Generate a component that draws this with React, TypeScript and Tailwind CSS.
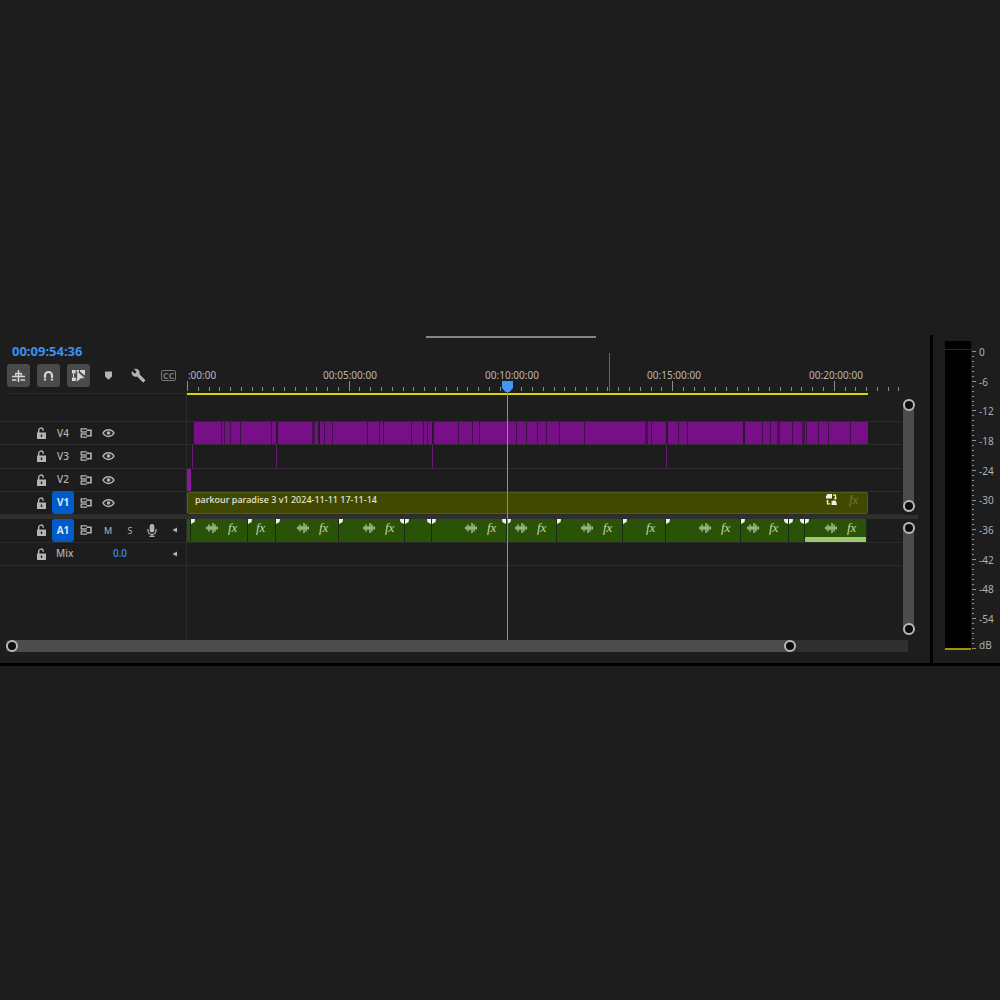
import type { ReactNode } from "react";
import clsx from "clsx";
import { MdBuild } from "react-icons/md";

type AudioClip = {
  width: number;
  wave?: boolean;
  fx?: boolean;
  fadeIn?: boolean;
  fadeOut?: boolean;
  peaks?: boolean;
};

const SEQUENCE_WIDTH = 681;
const PLAYHEAD = 320;

const timeLabels = [
  { text: ":00:00", at: 15 },
  { text: "00:05:00:00", at: 163 },
  { text: "00:10:00:00", at: 325 },
  { text: "00:15:00:00", at: 487 },
  { text: "00:20:00:00", at: 649 },
];

const thinCuts = [
  34, 37, 43, 53, 84, 137, 145, 180, 192, 196, 224, 236, 240, 271, 285, 292, 329, 339, 350, 359,
  372, 397, 464, 491, 500, 575, 583, 605, 619, 631, 641, 663,
];
const gaps = [89, 131, 245, 479, 556];
const denseCuts = [125, 458, 590, 615];

const v3Clips = [5, 89, 245, 479];

const audioClips: AudioClip[] = [
  { width: 4 },
  { width: 57, wave: true, fx: true, fadeIn: true },
  { width: 28, fx: true, fadeIn: true },
  { width: 63, wave: true, fx: true, fadeIn: true },
  { width: 66, wave: true, fx: true, fadeIn: true, fadeOut: true },
  { width: 27, fadeIn: true, fadeOut: true },
  { width: 75, wave: true, fx: true, fadeIn: true, fadeOut: true },
  { width: 50, wave: true, fx: true, fadeIn: true },
  { width: 66, wave: true, fx: true, fadeIn: true },
  { width: 43, fx: true, fadeIn: true },
  { width: 75, wave: true, fx: true, fadeIn: true },
  { width: 48, wave: true, fx: true, fadeIn: true, fadeOut: true },
  { width: 16, fadeIn: true, fadeOut: true },
  { width: 62, wave: true, fx: true, fadeIn: true, peaks: true },
];

const meterLabels = ["0", "-6", "-12", "-18", "-24", "-30", "-36", "-42", "-48", "-54"];

function NestIcon() {
  return (
    <svg width="15" height="14" viewBox="0 0 15 14" stroke="currentColor" fill="none">
      <path d="M7.500 1v12" strokeWidth="1.500" />
      <path d="M4 4.500h7" strokeWidth="1.400" />
      <path d="M1 7.500h13M1 11h4.500M9.500 11H14" strokeWidth="1.700" />
      <path d="M4.800 4v4M10.200 4v4" strokeWidth="1.200" />
    </svg>
  );
}

function MagnetIcon() {
  return (
    <svg width="11" height="11" viewBox="0 0 11 11" fill="none" stroke="currentColor">
      <path d="M2 10.500V5.500a3.500 3.500 0 0 1 7 0v5" strokeWidth="2.200" />
      <path d="M.5 8.300h3M7.500 8.300h3" stroke="#4a4a4a" strokeWidth=".8" />
    </svg>
  );
}

function LinkedSelectionIcon() {
  return (
    <svg width="15" height="15" viewBox="0 0 15 15" fill="currentColor">
      <path d="M1 2h3.500v3.500H1zM5.500 2h2.500v2.500H5.500zM9 2h5v5.500l-2-1.500L9 3.500zM1 9.500h3.500V13H1z" />
      <path d="M2.500 6v3M5 10v3" stroke="currentColor" />
      <path d="M6 3.200 14 9.900 9.800 10.400 6 14z" stroke="#4a4a4a" strokeWidth=".4" />
    </svg>
  );
}

function LockIcon() {
  return (
    <svg width="11" height="12" viewBox="0 0 11 12" fill="none">
      <path d="M2.700 6V3.300a2.300 2.300 0 0 1 4.500-.6v1" stroke="currentColor" strokeWidth="1.400" />
      <path fill="currentColor" fillRule="evenodd" d="M1 5.500h9V12H1zM4.800 7.500v2.600h1.400V7.500z" />
    </svg>
  );
}

function SyncLockIcon() {
  return (
    <svg width="12" height="10" viewBox="0 0 12 10" fill="none" stroke="currentColor">
      <path d="M7 .8H1.200v3H7M7 9.200H1.200v-3H7" strokeWidth="1.300" />
      <path d="M6.500 2.200h4.500v5.600H6.500" strokeWidth="1.600" />
      <path d="M1 5h5" strokeWidth=".6" />
    </svg>
  );
}

function EyeIcon() {
  return (
    <svg width="13" height="10" viewBox="0 0 13 10" fill="none" stroke="currentColor">
      <path d="M1 5C3.500.5 9.500.5 12 5 9.500 9.500 3.500 9.500 1 5z" strokeWidth="1.500" />
      <circle cx="6.500" cy="5" r="1.800" fill="currentColor" stroke="none" />
    </svg>
  );
}

function MicIcon() {
  return (
    <svg width="10" height="13" viewBox="0 0 10 13" fill="none" stroke="currentColor">
      <rect x="2.700" y="0" width="4.600" height="8.500" rx="2.300" fill="currentColor" stroke="none" />
      <path d="M1 5v1.500a4 4 0 0 0 8 0V5M5 10.500V13M2.500 12.400h5" strokeWidth="1.200" />
    </svg>
  );
}

function WaveIcon() {
  return (
    <svg width="12" height="10" viewBox="0 0 12 10" stroke="currentColor" strokeWidth="1.200" fill="none">
      <path d="M1 3.500v3M3 1.500v7M5 3v4M7 0v10M9 1.500v7M11.200 3.500v3" />
      <path d="M0 5h12" strokeWidth=".6" />
    </svg>
  );
}

function ReplaceIcon() {
  return (
    <svg width="11" height="11" viewBox="0 0 11 11" fill="currentColor">
      <path d="M1 0h5v4.500H0V1.500h1zM5.500 7h1.200a1.500 1.500 0 0 1 2.600 0h.7l1 4H5.500z" />
      <path d="M7 1.200h2.500v3M4 9.800H1.500V7.500" fill="none" stroke="currentColor" strokeWidth="1.200" />
      <path d="M7.800 3.800h3.200L9.400 6zM0 7.800h3L1.500 5.600z" />
    </svg>
  );
}

function ToolButton({ label, active, children }: { label: string; active?: boolean; children: ReactNode }) {
  return (
    <button
      aria-label={label}
      className={clsx(
        "flex h-[23px] w-[23px] shrink-0 items-center justify-center rounded-[3px]",
        active ? "bg-[#4a4a4a] text-[#d8d8d8]" : "text-[#b4b4b4]",
      )}
    >
      {children}
    </button>
  );
}

function TrackHeader({ name, targeted, children }: { name: string; targeted?: boolean; children?: ReactNode }) {
  return (
    <div className="flex w-[187px] shrink-0 items-center border-r border-[#2c2c2c] pl-9 text-[#b4b4b4]">
      <button aria-label={`Lock ${name}`} className="mr-[5px]">
        <LockIcon />
      </button>
      <button
        className={clsx(
          "mr-[6px] flex h-[23px] w-[22px] items-center justify-center rounded-[3px] text-[10px]",
          targeted ? "bg-[#005cc8] font-bold text-[#d6e6fa]" : "font-medium",
        )}
      >
        {name}
      </button>
      <button aria-label={`Sync lock ${name}`} className="mr-[5px]">
        <SyncLockIcon />
      </button>
      {children}
    </div>
  );
}

function HeaderCell({ label, children }: { label: string; children: ReactNode }) {
  return (
    <button aria-label={label} className="flex w-[22px] justify-center text-[9px]">
      {children}
    </button>
  );
}

function VideoTrack({ name, targeted, children }: { name: string; targeted?: boolean; children: ReactNode }) {
  return (
    <div className="flex border-b border-[#2c2c2c]">
      <TrackHeader name={name} targeted={targeted}>
        <HeaderCell label={`Toggle ${name} output`}>
          <EyeIcon />
        </HeaderCell>
      </TrackHeader>
      <div className="relative min-w-0 flex-1 overflow-hidden">{children}</div>
    </div>
  );
}

function Knob() {
  return <span className="h-3 w-3 shrink-0 rounded-full border-2 border-[#b8b8b8] bg-[#0c0c0c]" />;
}

function VerticalZoom() {
  return (
    <div className="mt-[3px] flex h-[113px] w-[11px] flex-col items-center justify-between rounded-full bg-[#4c4c4c]">
      <Knob />
      <Knob />
    </div>
  );
}

function Clip({ clip }: { clip: AudioClip }) {
  return (
    <div
      className={clsx(
        "relative flex shrink-0 justify-end gap-[10px] overflow-hidden border-r border-[#1c2c12] bg-[#295407] pt-[3px] text-[#c4d6b6]",
        clip.fx && "pr-[9px]",
      )}
      style={{ width: clip.width }}
    >
      {clip.fadeIn && (
        <span className="absolute top-0 left-0 h-[5px] w-1 bg-[#f0f0f0] [clip-path:polygon(0_0,100%_0,90%_60%,0_100%)]" />
      )}
      {clip.fadeOut && (
        <span className="absolute top-0 right-0 h-[5px] w-1 bg-[#f0f0f0] [clip-path:polygon(0_0,100%_0,100%_100%,10%_60%)]" />
      )}
      {clip.wave && (
        <span className="pt-px">
          <WaveIcon />
        </span>
      )}
      {clip.fx && <Fx />}
      {clip.peaks && <span className="absolute inset-x-0 bottom-0 h-[5px] bg-[#9cc870]" />}
    </div>
  );
}

function Fx() {
  return (
    <span className="block w-[10px] font-['Liberation_Serif',serif] text-[13px] leading-[12px] italic">fx</span>
  );
}

function Ruler() {
  return (
    <div className="relative flex min-w-0 flex-1 flex-col justify-end overflow-hidden">
      {timeLabels.map((label) => (
        <span
          key={label.text}
          className="absolute top-[33px] -translate-x-1/2 text-[10px] leading-[14px] text-[#b8b8b8]"
          style={{ left: label.at }}
        >
          {label.text}
        </span>
      ))}
      <svg width="715" height="11" stroke="#8c8c8c" className="mb-px">
        {Array.from({ length: 67 }, (_, i) => {
          const x = Math.round(i * 10.78) + 0.5;
          return <line key={i} x1={x} x2={x} y1={i % 15 === 0 ? 0 : 6} y2="10" />;
        })}
      </svg>
      <span className="absolute top-[18px] left-[422px] h-[38px] w-px bg-[#666666]" />
      <span className="h-[2px] bg-[#d8d800]" style={{ width: SEQUENCE_WIDTH }} />
    </div>
  );
}

function Toolbar() {
  return (
    <div className="flex w-[187px] shrink-0 flex-col pl-[7px]">
      <button className="mt-[7px] ml-[5px] self-start text-[13px] leading-[18px] font-bold text-[#3d8ff0]">
        00:09:54:36
      </button>
      <div className="mt-1 flex gap-[7px]">
        <ToolButton label="Insert as nests" active>
          <NestIcon />
        </ToolButton>
        <ToolButton label="Snap" active>
          <MagnetIcon />
        </ToolButton>
        <ToolButton label="Linked selection" active>
          <LinkedSelectionIcon />
        </ToolButton>
        <ToolButton label="Add marker">
          <svg width="9" height="9" viewBox="0 0 9 9" fill="currentColor">
            <path d="M1 1q0-.500.500-.500h6q.5 0 .5.500v4.500L4.500 8.800 1 5.500z" />
          </svg>
        </ToolButton>
        <ToolButton label="Timeline settings">
          <MdBuild size={15} />
        </ToolButton>
        <ToolButton label="Captions">
          <span className="flex h-[11px] w-[15px] shrink-0 items-center justify-center rounded-[2px] border border-[#777777] text-[9px] leading-[9px] font-bold text-[#777777]">
            CC
          </span>
        </ToolButton>
      </div>
      <div className="mt-auto mb-px h-px bg-[#2c2c2c]" />
    </div>
  );
}

function Timeline() {
  return (
    <section className="relative min-w-0 flex-1">
      <div className="absolute inset-x-0 top-px ml-[91px] flex justify-center">
        <span className="h-[2px] w-[170px] bg-[#868686]" />
      </div>

      <div className="flex h-[60px] pr-7">
        <Toolbar />
        <Ruler />
      </div>

      <div className="flex">
        <div className="min-w-0 flex-1">
          <div className="h-[27px] border-b border-[#2c2c2c]">
            <div className="h-full w-[187px] border-r border-[#2c2c2c]" />
          </div>
          <div className="grid h-[93px] grid-rows-4">
            <VideoTrack name="V4">
              <div className="relative ml-[7px] h-full w-[674px] bg-[#780f88]">
                <div className="absolute inset-y-0 -left-[7px]">
                  {thinCuts.map((x) => (
                    <span key={x} className="absolute inset-y-0 w-px bg-[#3a1243]" style={{ left: x }} />
                  ))}
                  {denseCuts.map((x) => (
                    <span key={x} className="absolute inset-y-0 w-[3px] bg-[#47114f]" style={{ left: x }} />
                  ))}
                  {gaps.map((x) => (
                    <span key={x} className="absolute inset-y-0 w-[2px] bg-[#251a28]" style={{ left: x }} />
                  ))}
                </div>
              </div>
            </VideoTrack>
            <VideoTrack name="V3">
              {v3Clips.map((x) => (
                <span key={x} className="absolute inset-y-0 w-px bg-[#6c1a78]" style={{ left: x }} />
              ))}
            </VideoTrack>
            <VideoTrack name="V2">
              <div className="h-full w-1 bg-[#8a189a]" />
            </VideoTrack>
            <VideoTrack name="V1" targeted>
              <div className="flex h-full w-[681px] items-start rounded-[2px] border border-[#555c14] bg-[#414900] pr-2 pl-[7px]">
                <span className="flex-1 text-[9px] leading-[14px] font-medium text-[#e4e4dc]">
                  parkour paradise 3 v1 2024-11-11 17-11-14
                </span>
                <span className="mt-px mr-3 text-[#f0f0e8]">
                  <ReplaceIcon />
                </span>
                <span className="mt-px text-[#6e743c]">
                  <Fx />
                </span>
              </div>
            </VideoTrack>
          </div>
        </div>
        <div className="w-7 pt-px pl-px">
          <VerticalZoom />
        </div>
      </div>

      <div className="mr-3 h-1 bg-[#2f2f2f]" />

      <div className="flex">
        <div className="flex min-w-0 flex-1 flex-col">
          <div className="grid h-[47px] grid-rows-2">
            <div className="flex border-b border-[#2c2c2c]">
              <TrackHeader name="A1" targeted>
                <HeaderCell label="Mute track">M</HeaderCell>
                <HeaderCell label="Solo track">S</HeaderCell>
                <HeaderCell label="Voice-over record">
                  <MicIcon />
                </HeaderCell>
                <HeaderCell label="Keyframes">
                  <KeyframeArrow />
                </HeaderCell>
              </TrackHeader>
              <div className="flex min-w-0 flex-1 overflow-hidden">
                {audioClips.map((clip, i) => (
                  <Clip key={i} clip={clip} />
                ))}
              </div>
            </div>
            <div className="flex border-b border-[#2c2c2c]">
              <div className="flex w-[187px] items-center border-r border-[#2c2c2c] pl-9 text-[#b4b4b4]">
                <button aria-label="Lock mix" className="mr-[9px]">
                  <LockIcon />
                </button>
                <span className="w-[52px] text-[10px] font-medium">Mix</span>
                <button className="w-6 text-center text-[10px] font-medium text-[#3d8ff0]">0.0</button>
                <span className="ml-[31px] flex w-[22px] justify-center">
                  <KeyframeArrow />
                </span>
              </div>
            </div>
          </div>
          <div className="w-[187px] flex-1 border-r border-[#2c2c2c]" />
        </div>
        <div className="h-[121px] w-7 pl-px">
          <VerticalZoom />
        </div>
      </div>

      <div className="mr-[22px] mb-[11px] ml-[6px] h-3 bg-[#303030] pr-[112px]">
        <div className="flex items-center justify-between rounded-full bg-[#4c4c4c]">
          <Knob />
          <Knob />
        </div>
      </div>

      {/* playhead */}
      <div className="pointer-events-none absolute top-[46px] bottom-[23px] left-[187px]">
        <div className="absolute inset-y-0 w-px bg-[#4a9bff]" style={{ left: PLAYHEAD }} />
        <svg
          width="11"
          height="11"
          viewBox="0 0 11 11"
          className="absolute top-0 -translate-x-[5px]"
          style={{ left: PLAYHEAD }}
        >
          <path d="M0 0h11v7L7.500 11h-4L0 7z" fill="#3f97fb" />
        </svg>
      </div>
    </section>
  );
}

function KeyframeArrow() {
  return (
    <svg width="5" height="6" viewBox="0 0 5 6" fill="currentColor">
      <path d="M5 .5v5L.5 3z" />
    </svg>
  );
}

function AudioMeter() {
  return (
    <section className="flex w-[67px] shrink-0 pt-[6px] pl-3 text-[10px] text-[#b0b0b0]">
      <div className="flex h-[309px] w-[26px] flex-col bg-black">
        <div className="mt-2 h-px bg-[#2a2a2a]" />
        <div className="mt-auto h-[2px] bg-[#9c9600]" />
      </div>
      <svg width="6" height="309" stroke="#909090" className="mr-[2px]">
        {Array.from({ length: 61 }, (_, i) => {
          const y = Math.round(10 + i * 4.95) + 0.5;
          return <line key={i} x1="1" x2={i % 6 === 0 ? 5 : 3} y1={y} y2={y} />;
        })}
      </svg>
      <div className="pt-1">
        <div className="flex h-[281px] flex-col justify-between">
          {meterLabels.map((label) => (
            <span key={label} className="leading-[14px]">
              {label}
            </span>
          ))}
        </div>
        <span className="mt-3 block leading-[14px]">dB</span>
      </div>
    </section>
  );
}

export default function App() {
  return (
    <main className="min-h-screen bg-[#1d1d1d] pt-[335px] font-['Noto_Sans','Open_Sans',sans-serif]">
      <div className="flex border-b-[3px] border-black">
        <Timeline />
        <div className="w-[3px] shrink-0 bg-black" />
        <AudioMeter />
      </div>
    </main>
  );
}
